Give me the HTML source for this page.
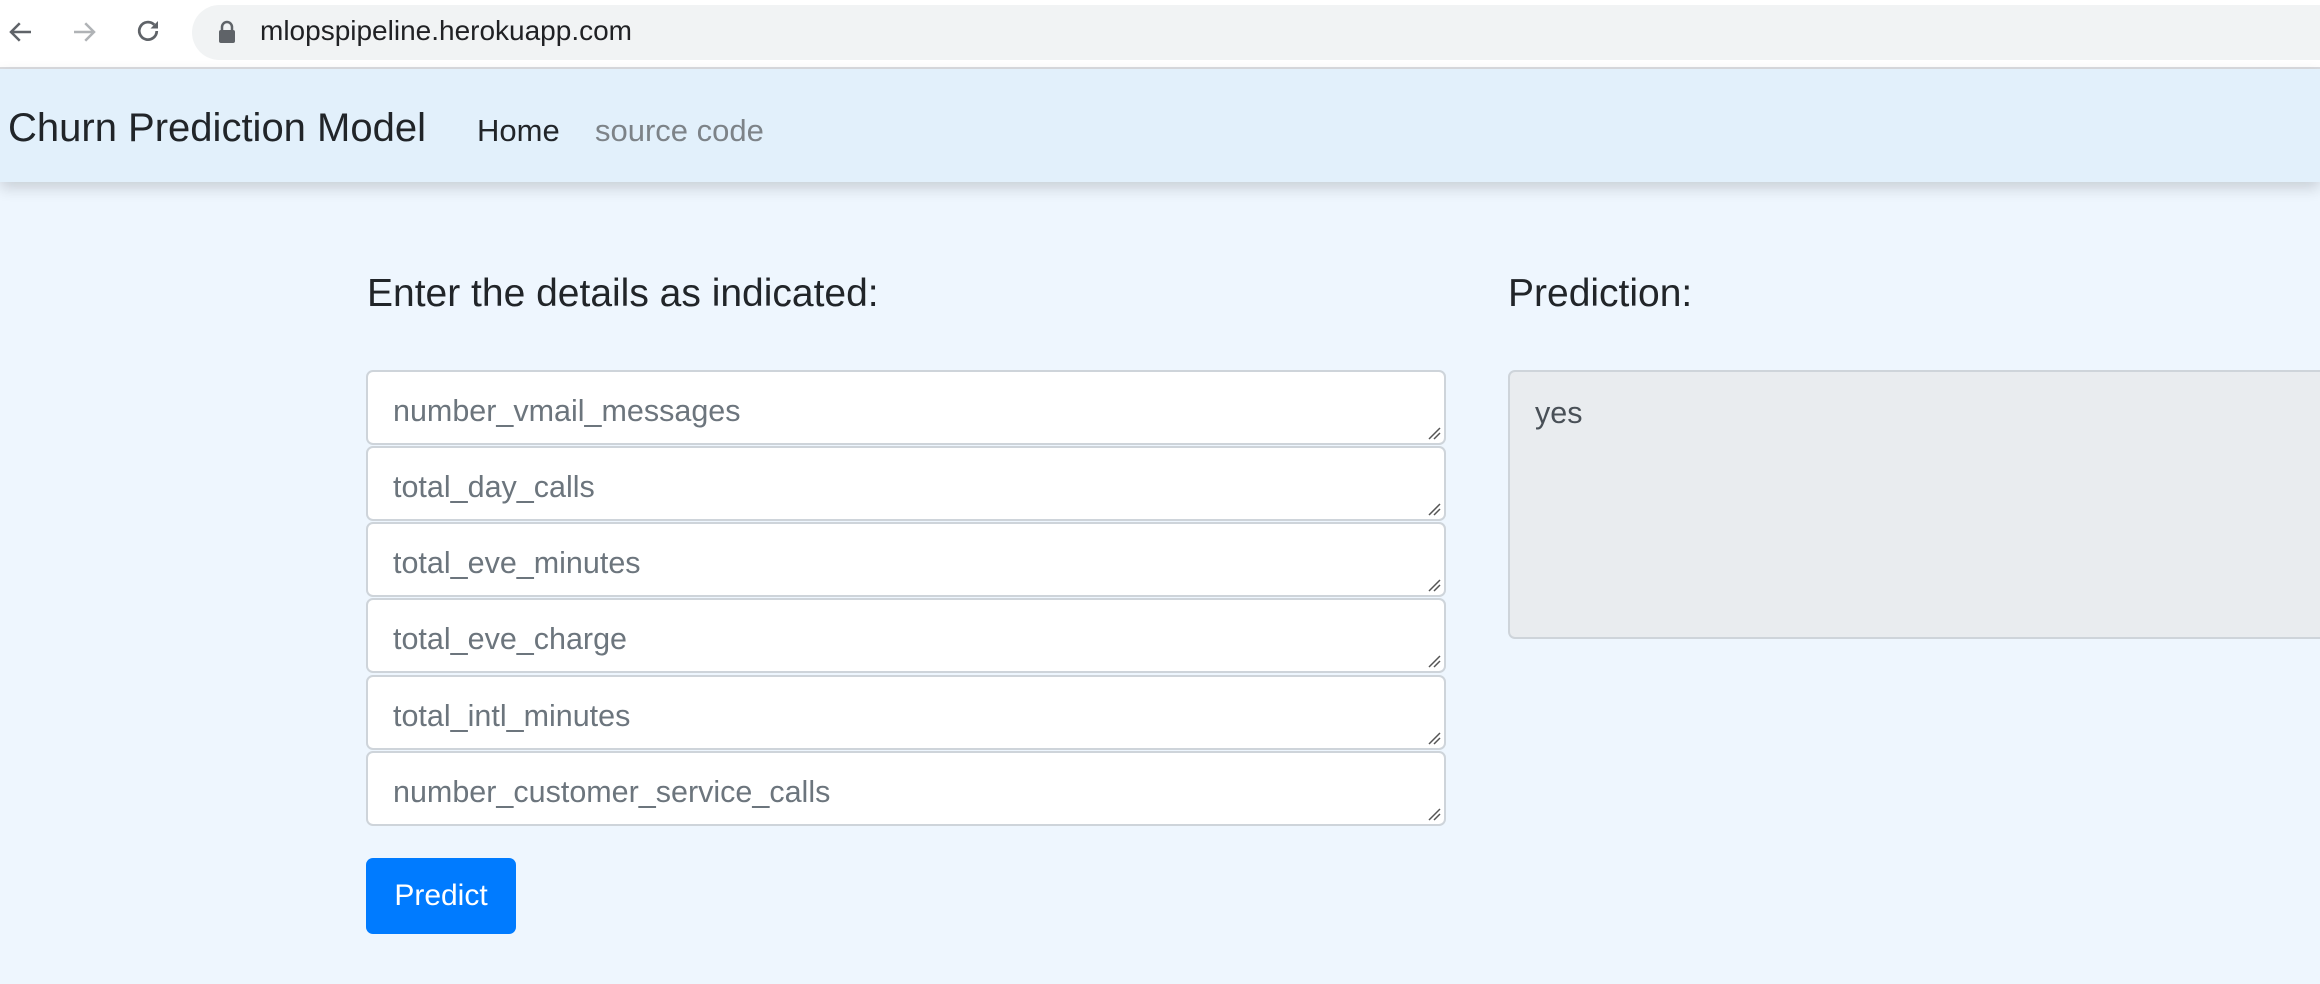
<!DOCTYPE html>
<html><head><meta charset="utf-8"><style>
*{box-sizing:border-box;margin:0;padding:0}
html,body{width:2320px;height:984px;overflow:hidden;background:#eef6fe;font-family:"Liberation Sans",sans-serif}
.chrome{position:absolute;left:0;top:0;width:2320px;height:69px;background:#fff;border-bottom:2px solid #dadce0}
.url{position:absolute;left:192px;top:5px;width:2200px;height:55px;border-radius:28px;background:#f1f3f4}
.urltxt{position:absolute;left:260px;top:15px;font-size:28px;color:#202124}
.nav{position:absolute;left:0;top:69px;width:2320px;height:113px;background:#e2f0fb;box-shadow:0 6px 14px rgba(0,0,0,.16)}
.brand{position:absolute;left:8px;top:37px;font-size:40px;color:#212529}
.home{position:absolute;left:477px;top:44px;font-size:31px;color:#212529}
.src{position:absolute;left:595px;top:44px;font-size:31px;color:#7d8388}
h4{position:absolute;font-weight:normal;font-size:39px;color:#212529}
.ta{position:absolute;left:366px;width:1080px;height:75px;background:#fff;border:2px solid #ced4da;border-radius:7px}
.ta span{position:absolute;left:25px;top:22px;font-size:30.5px;color:#6c757d}
.ta svg{position:absolute;right:3px;bottom:3px}
.btn{position:absolute;left:366px;top:858px;width:150px;height:76px;background:#007bff;border-radius:7px;color:#fff;font-size:30px;text-align:center;line-height:76px}
.pred{position:absolute;left:1508px;top:370px;width:830px;height:269px;background:#e9ecef;border:2px solid #ced4da;border-radius:7px}
.pred span{position:absolute;left:25px;top:24px;font-size:30.5px;color:#495057}
</style></head><body>
<div class="chrome">
<svg style="position:absolute;left:6px;top:17px" width="30" height="30" viewBox="0 0 24 24"><path d="M20 12H5M11 5l-7 7 7 7" stroke="#5f6368" stroke-width="2" fill="none"/></svg>
<svg style="position:absolute;left:69px;top:17px" width="30" height="30" viewBox="0 0 24 24"><path d="M4 12h15M13 5l7 7-7 7" stroke="#b0b3b6" stroke-width="2" fill="none"/></svg>
<svg style="position:absolute;left:133px;top:16px" width="30" height="30" viewBox="0 0 24 24"><path d="M19 12a7 7 0 1 1-2-5" stroke="#5f6368" stroke-width="2.2" fill="none"/><path d="M20 4v6h-6z" fill="#5f6368"/></svg>
<div class="url"></div>
<svg style="position:absolute;left:218px;top:20px" width="18" height="24" viewBox="0 0 18 24"><path d="M4 11V7a5 5 0 0 1 10 0v4" stroke="#5f6368" stroke-width="2.5" fill="none"/><rect x="1" y="10" width="16" height="13" rx="2" fill="#5f6368"/></svg>
<div class="urltxt">mlopspipeline.herokuapp.com</div>
</div>
<div class="nav">
<div class="brand">Churn Prediction Model</div>
<div class="home">Home</div>
<div class="src">source code</div>
</div>
<h4 style="left:367px;top:272px">Enter the details as indicated:</h4>
<h4 style="left:1508px;top:272px">Prediction:</h4>
<div class="ta" style="top:370px"><span>number_vmail_messages</span><svg width="14" height="14"><path d="M2 13L13 2M7 13L13 7" stroke="#555" stroke-width="1.5"/></svg></div>
<div class="ta" style="top:446px"><span>total_day_calls</span><svg width="14" height="14"><path d="M2 13L13 2M7 13L13 7" stroke="#555" stroke-width="1.5"/></svg></div>
<div class="ta" style="top:522px"><span>total_eve_minutes</span><svg width="14" height="14"><path d="M2 13L13 2M7 13L13 7" stroke="#555" stroke-width="1.5"/></svg></div>
<div class="ta" style="top:598px"><span>total_eve_charge</span><svg width="14" height="14"><path d="M2 13L13 2M7 13L13 7" stroke="#555" stroke-width="1.5"/></svg></div>
<div class="ta" style="top:675px"><span>total_intl_minutes</span><svg width="14" height="14"><path d="M2 13L13 2M7 13L13 7" stroke="#555" stroke-width="1.5"/></svg></div>
<div class="ta" style="top:751px"><span>number_customer_service_calls</span><svg width="14" height="14"><path d="M2 13L13 2M7 13L13 7" stroke="#555" stroke-width="1.5"/></svg></div>
<div class="btn">Predict</div>
<div class="pred"><span>yes</span></div>
</body></html>
